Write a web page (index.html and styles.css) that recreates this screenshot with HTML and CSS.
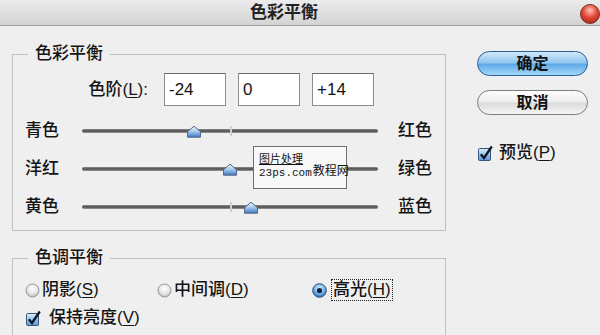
FILE: index.html
```html
<!DOCTYPE html>
<html lang="zh-CN">
    <head>
        <meta charset="UTF-8">
        <title>色彩平衡</title>
        <link rel="stylesheet" href="styles.css">
    </head>
    <body>
        <div class="dialog">
            <svg class="defs" aria-hidden="true">
                <defs>
                    <linearGradient id="thumb-fill" x1="0" y1="0" x2="0" y2="1">
                        <stop offset="0" stop-color="#f2f7fc"/>
                        <stop offset="0.45" stop-color="#aacdef"/>
                        <stop offset="1" stop-color="#3d78c0"/>
                    </linearGradient>
                    <linearGradient id="check-fill" x1="0" y1="0" x2="0" y2="1">
                        <stop offset="0" stop-color="#e2eef9"/>
                        <stop offset="0.5" stop-color="#9cc2e8"/>
                        <stop offset="1" stop-color="#5d93cf"/>
                    </linearGradient>
                    <radialGradient id="radio-off" cx="0.5" cy="0.35" r="0.65">
                        <stop offset="0" stop-color="#ffffff"/>
                        <stop offset="0.6" stop-color="#e6e6e6"/>
                        <stop offset="1" stop-color="#bababa"/>
                    </radialGradient>
                    <radialGradient id="radio-on" cx="0.5" cy="0.35" r="0.65">
                        <stop offset="0" stop-color="#e4f3ff"/>
                        <stop offset="0.55" stop-color="#79b6ec"/>
                        <stop offset="1" stop-color="#2c68b2"/>
                    </radialGradient>
                </defs>
            </svg>

            <div class="titlebar">
                <span class="title">色彩平衡</span>
                <span class="close"></span>
            </div>

            <div class="main">
                <div class="left">
                    <fieldset class="group balance">
                        <legend>色彩平衡</legend>
                        <div class="levels">
                            <label class="levels-label">色阶(<u>L</u>):</label>
                            <input class="field" value="-24">
                            <input class="field" value="0">
                            <input class="field" value="+14">
                        </div>
                        <div class="slider-row">
                            <span class="slider-label">青色</span>
                            <div class="track">
                                <span class="tick"></span>
                                <svg class="thumb" style="left: 38%" viewBox="0 0 16 14"><polygon points="1.5,12.5 1.5,7 8,1.5 14.5,7 14.5,12.5" fill="url(#thumb-fill)" stroke="#55688a"/></svg>
                            </div>
                            <span class="slider-label">红色</span>
                        </div>
                        <div class="slider-row">
                            <span class="slider-label">洋红</span>
                            <div class="track">
                                <span class="tick"></span>
                                <svg class="thumb" style="left: 50%" viewBox="0 0 16 14"><polygon points="1.5,12.5 1.5,7 8,1.5 14.5,7 14.5,12.5" fill="url(#thumb-fill)" stroke="#55688a"/></svg>
                            </div>
                            <span class="slider-label">绿色</span>
                        </div>
                        <div class="slider-row">
                            <span class="slider-label">黄色</span>
                            <div class="track">
                                <span class="tick"></span>
                                <svg class="thumb" style="left: 57%" viewBox="0 0 16 14"><polygon points="1.5,12.5 1.5,7 8,1.5 14.5,7 14.5,12.5" fill="url(#thumb-fill)" stroke="#55688a"/></svg>
                            </div>
                            <span class="slider-label">蓝色</span>
                        </div>
                    </fieldset>

                    <fieldset class="group tone">
                        <legend>色调平衡</legend>
                        <div class="radios">
                            <label class="radio">
                                <svg class="radio-icon" viewBox="0 0 15 15"><circle cx="7.5" cy="7.5" r="6.5" fill="url(#radio-off)" stroke="#9a9a9a"/></svg>
                                <span>阴影(<u>S</u>)</span>
                            </label>
                            <label class="radio">
                                <svg class="radio-icon" viewBox="0 0 15 15"><circle cx="7.5" cy="7.5" r="6.5" fill="url(#radio-off)" stroke="#9a9a9a"/></svg>
                                <span>中间调(<u>D</u>)</span>
                            </label>
                            <label class="radio">
                                <svg class="radio-icon" viewBox="0 0 15 15"><circle cx="7.5" cy="7.5" r="6.8" fill="url(#radio-on)" stroke="#2a4f80"/><circle cx="7.5" cy="7.5" r="2.6" fill="#10223a"/></svg>
                                <span class="focus">高光(<u>H</u>)</span>
                            </label>
                        </div>
                        <label class="check">
                            <svg class="check-icon" viewBox="0 0 17 17"><rect x="1.5" y="3.5" width="12" height="12" rx="1" fill="url(#check-fill)" stroke="#34557e"/><path d="M3.8 9.2 L7 13 L14.8 1.5" fill="none" stroke="#0c1828" stroke-width="2.3"/></svg>
                            <span>保持亮度(<u>V</u>)</span>
                        </label>
                    </fieldset>
                </div>

                <div class="side">
                    <button class="btn btn-ok">确定</button>
                    <button class="btn">取消</button>
                    <label class="check preview">
                        <svg class="check-icon" viewBox="0 0 17 17"><rect x="1.5" y="3.5" width="12" height="12" rx="1" fill="url(#check-fill)" stroke="#34557e"/><path d="M3.8 9.2 L7 13 L14.8 1.5" fill="none" stroke="#0c1828" stroke-width="2.3"/></svg>
                        <span>预览(<u>P</u>)</span>
                    </label>
                </div>
            </div>

            <div class="watermark">
                <div class="wm-left">
                    <span class="wm-cn">图片处理</span>
                    <span class="wm-url">23ps.com</span>
                </div>
                <span class="wm-right">教程网</span>
            </div>
        </div>
    </body>
</html>
```

FILE: styles.css
```css
* {
    box-sizing: border-box;
}
body {
    margin: 0;
    background-color: #efefef;
    color: #141414;
    font-family: "Liberation Sans", "Noto Sans CJK SC", sans-serif;
    font-size: 17px;
    font-weight: 500;
    line-height: 20px;
    overflow: hidden;
}
u {
    text-decoration-thickness: 1px;
    text-underline-offset: 2px;
}

.dialog {
    position: relative;
    width: 600px;
    height: 335px;
    overflow: hidden;
}
.defs {
    display: block;
    width: 0;
    height: 0;
}

/* title bar */
.titlebar {
    position: relative;
    height: 26px;
    display: flex;
    align-items: center;
    justify-content: center;
    padding-right: 32px;
    background: linear-gradient(#ececec, #d3d3d3);
    border-bottom: 1px solid #a3a3a3;
}
.title {
    font-weight: bold;
    font-size: 17px;
    color: #222;
}
.close {
    position: absolute;
    right: 0;
    top: 4px;
    width: 20px;
    height: 20px;
    border-radius: 50%;
    border: 1px solid #7c2a22;
    background: radial-gradient(circle at 50% 30%, #ffc2b4 0, #e4493c 45%, #9c1a12 100%);
}

.main {
    display: flex;
}
.left {
    width: 434px;
    margin-left: 12px;
}

/* group boxes */
.group {
    width: 434px;
    min-width: 0;
    margin: 18px 0 0;
    padding: 9px 0 4px 12px;
    border: 1px solid #c0c0c0;
}
.group legend {
    margin-left: 3px;
    padding: 0 7px;
    line-height: 20px;
}
.tone {
    margin-top: 17px;
    padding: 11px 0 20px 12px;
}

/* levels */
.levels {
    display: flex;
    align-items: center;
    height: 33px;
}
.levels-label {
    width: 123px;
    margin-right: 16px;
    text-align: right;
}
.field {
    width: 62px;
    height: 33px;
    margin-right: 12px;
    padding: 0 4px;
    border: 1px solid #8c8c8c;
    border-top-color: #6c6c6c;
    background: #fff;
    color: inherit;
    font: inherit;
}

/* sliders */
.slider-row {
    display: flex;
    align-items: center;
    height: 38px;
}
.levels + .slider-row {
    margin-top: 6px;
}
.slider-label {
    width: 35px;
    white-space: nowrap;
}
.track {
    position: relative;
    width: 296px;
    height: 4px;
    margin: 0 20px 0 22px;
    border-radius: 2px;
    background: linear-gradient(#8c8c8c, #4c4c4c 50%, #9c9c9c);
}
.tick {
    position: absolute;
    left: 50%;
    top: -3px;
    width: 2px;
    height: 10px;
    background: #cfcfcf;
}
.thumb {
    position: absolute;
    top: 50%;
    width: 16px;
    height: 14px;
    transform: translate(-50%, -45%);
}

/* tone balance */
.radios {
    display: flex;
    align-items: center;
    height: 22px;
}
.radio {
    display: flex;
    align-items: center;
    gap: 2px;
}
.radio:nth-child(1) {
    width: 132px;
}
.radio:nth-child(2) {
    width: 155px;
}
.radio-icon {
    width: 15px;
    height: 15px;
}
.radio:nth-child(3) .radio-icon {
    margin-right: 3px;
}
.focus {
    outline: 1px dotted #222;
    outline-offset: 0;
    padding: 0 1px;
}
.check {
    display: flex;
    align-items: center;
    gap: 7px;
    height: 22px;
    margin-top: 6px;
}
.check-icon {
    width: 17px;
    height: 17px;
}

/* buttons */
.side {
    display: flex;
    flex-direction: column;
    align-items: flex-start;
    margin-left: 31px;
    padding-top: 25px;
}
.btn {
    width: 111px;
    height: 25px;
    padding: 0;
    border-radius: 13px;
    border: 1px solid #7d7d7d;
    background: linear-gradient(#fdfdfd, #ededed 48%, #dadada 52%, #f6f6f6);
    color: #111;
    font: inherit;
    font-size: 16px;
    font-weight: bold;
    line-height: 1;
}
.btn + .btn {
    margin-top: 14px;
}
.btn-ok {
    border-color: #2c5e98;
    background: linear-gradient(#d2e8fb, #8fc4ef 48%, #5ca7e6 52%, #a3d8fb);
}
.preview {
    gap: 5px;
    height: 20px;
    margin-top: 28px;
}

/* watermark */
.watermark {
    position: absolute;
    left: 253px;
    top: 146px;
    width: 94px;
    height: 43px;
    display: flex;
    align-items: flex-end;
    padding: 0 2px 9px 5px;
    border: 1px solid #6e6e6e;
    background: #f8f8f8;
    font-weight: normal;
    white-space: nowrap;
}
.wm-left {
    display: flex;
    flex-direction: column;
}
.wm-cn {
    font-size: 11px;
    line-height: 16px;
    text-decoration: underline;
    text-decoration-thickness: 1px;
}
.wm-url {
    font-family: "Liberation Mono", monospace;
    font-size: 11px;
    line-height: 12px;
}
.wm-right {
    font-size: 12px;
    line-height: 15px;
    margin-left: 1px;
}
```
